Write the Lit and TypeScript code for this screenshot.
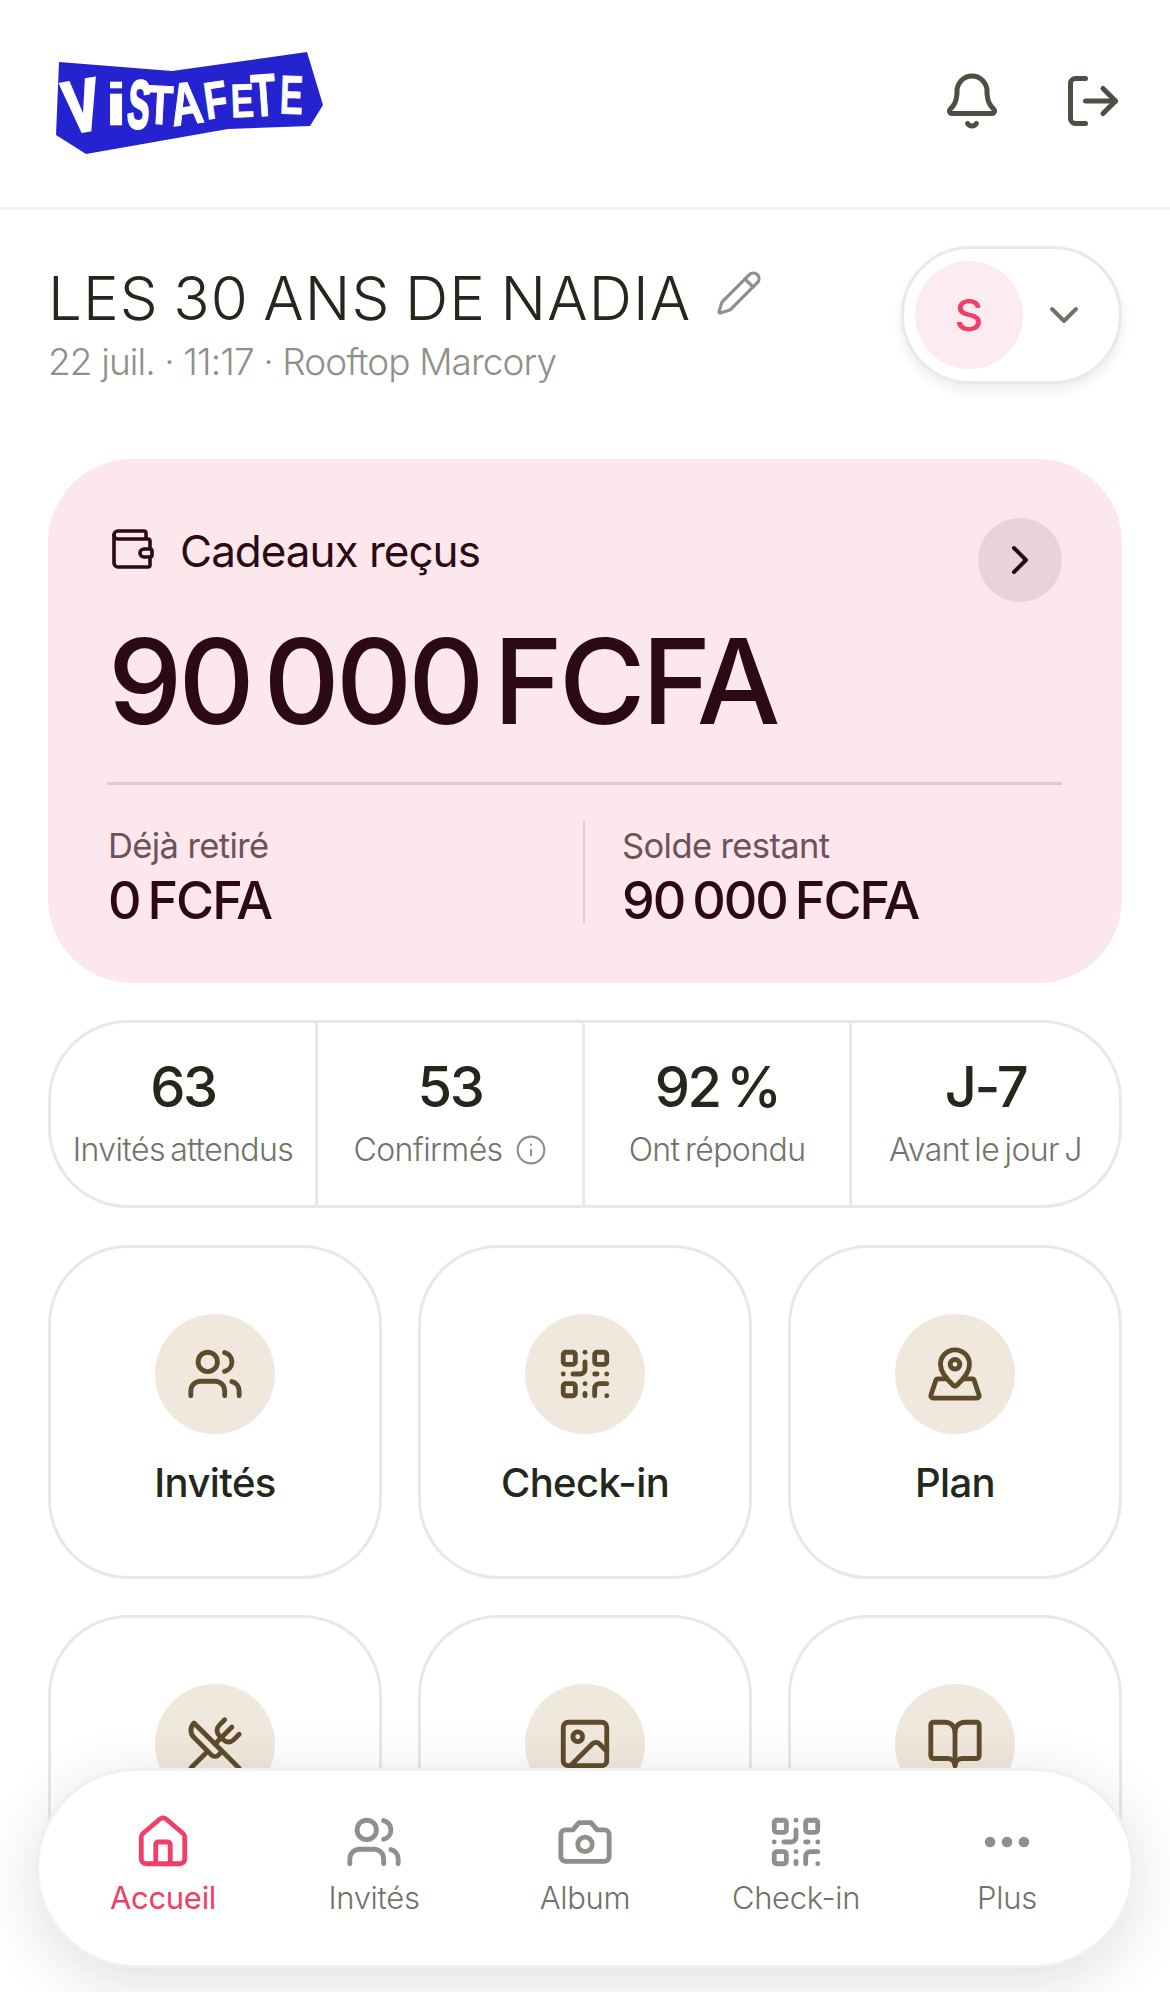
import { LitElement, html, css, svg, nothing } from "lit";
import { customElement } from "lit/decorators.js";

// lucide-style strokes, drawn on a 24 grid
const ICONS: Record<string, unknown> = {
  bell: svg`<path d="M10.268 21a2 2 0 0 0 3.464 0"/><path d="M3.262 15.326A1 1 0 0 0 4 17h16a1 1 0 0 0 .74-1.673C19.41 13.956 18 12.499 18 8A6 6 0 0 0 6 8c0 4.499-1.411 5.956-2.738 7.326"/>`,
  logout: svg`<path d="M9 21H5a2 2 0 0 1-2-2V5a2 2 0 0 1 2-2h4"/><path d="m16 17 5-5-5-5"/><path d="M21 12H9"/>`,
  pencil: svg`<path d="M21.174 6.812a1 1 0 0 0-3.986-3.987L3.842 16.174a2 2 0 0 0-.5.83l-1.321 4.352a.5.5 0 0 0 .623.622l4.353-1.32a2 2 0 0 0 .83-.497z"/><path d="m15 5 4 4"/>`,
  chevronDown: svg`<path d="m6 9 6 6 6-6"/>`,
  chevronRight: svg`<path d="m9 18 6-6-6-6"/>`,
  wallet: svg`<path d="M19 7V4a1 1 0 0 0-1-1H5a2 2 0 0 0 0 4h15a1 1 0 0 1 1 1v4h-3a2 2 0 0 0 0 4h3a1 1 0 0 0 1-1v-2a1 1 0 0 0-1-1"/><path d="M3 5v14a2 2 0 0 0 2 2h15a1 1 0 0 0 1-1v-4"/>`,
  info: svg`<circle cx="12" cy="12" r="10"/><path d="M12 16v-4"/><path d="M12 8h.01"/>`,
  users: svg`<path d="M16 21v-2a4 4 0 0 0-4-4H6a4 4 0 0 0-4 4v2"/><circle cx="9" cy="7" r="4"/><path d="M22 21v-2a4 4 0 0 0-3-3.87"/><path d="M16 3.13a4 4 0 0 1 0 7.75"/>`,
  qr: svg`<rect x="3" y="3" width="5" height="5" rx="1"/><rect x="16" y="3" width="5" height="5" rx="1"/><rect x="3" y="16" width="5" height="5" rx="1"/><path d="M21 16h-3a2 2 0 0 0-2 2v3"/><path d="M21 21v.01"/><path d="M12 7v3a2 2 0 0 1-2 2H7"/><path d="M3 12h.01"/><path d="M12 3h.01"/><path d="M12 16v.01"/><path d="M16 12h1"/><path d="M21 12v.01"/><path d="M12 21v-1"/>`,
  mapPin: svg`<path d="M18 8c0 3.613-3.869 7.429-5.393 8.795a1 1 0 0 1-1.214 0C9.87 15.429 6 11.613 6 8a6 6 0 0 1 12 0"/><circle cx="12" cy="8" r="2"/><path d="M8.714 14h-3.71a1 1 0 0 0-.948.683l-2.004 6A1 1 0 0 0 3 22h18a1 1 0 0 0 .948-1.316l-2-6a1 1 0 0 0-.949-.684h-3.712"/>`,
  utensils: svg`<path d="m16 2-2.3 2.3a3 3 0 0 0 0 4.2l1.8 1.8a3 3 0 0 0 4.2 0L22 8"/><path d="M15 15 3.3 3.3a4.2 4.2 0 0 0 0 6l7.3 7.3c.7.7 2 .7 2.8 0L15 15Zm0 0 7 7"/><path d="m2.1 21.8 6.4-6.3"/><path d="m19 5-7 7"/>`,
  image: svg`<rect x="3" y="3" width="18" height="18" rx="2"/><circle cx="9" cy="9" r="2"/><path d="m21 15-3.086-3.086a2 2 0 0 0-2.828 0L6 21"/>`,
  book: svg`<path d="M12 7v14"/><path d="M3 18a1 1 0 0 1-1-1V4a1 1 0 0 1 1-1h5a4 4 0 0 1 4 4 4 4 0 0 1 4-4h5a1 1 0 0 1 1 1v13a1 1 0 0 1-1 1h-6a3 3 0 0 0-3 3 3 3 0 0 0-3-3z"/>`,
  home: svg`<path d="M15 21v-8a1 1 0 0 0-1-1h-4a1 1 0 0 0-1 1v8"/><path d="M3 10a2 2 0 0 1 .709-1.528l7-5.999a2 2 0 0 1 2.582 0l7 5.999A2 2 0 0 1 21 10v9a2 2 0 0 1-2 2H5a2 2 0 0 1-2-2z"/>`,
  camera: svg`<path d="M14.5 4h-5L7 7H4a2 2 0 0 0-2 2v9a2 2 0 0 0 2 2h16a2 2 0 0 0 2-2V9a2 2 0 0 0-2-2h-3l-2.5-3z"/><circle cx="12" cy="13" r="3"/>`,
  dots: svg`<circle cx="5" cy="12" r="1.2" fill="currentColor"/><circle cx="12" cy="12" r="1.2" fill="currentColor"/><circle cx="19" cy="12" r="1.2" fill="currentColor"/>`,
};

const icon = (name: string, size: number, weight = 2) => html`
  <svg class="icon" width=${size} height=${size} viewBox="0 0 24 24" fill="none" stroke="currentColor"
    stroke-width=${weight} stroke-linecap="round" stroke-linejoin="round">${ICONS[name]}</svg>
`;

// letter, centre x, baseline y, rotation, x scale, y scale, extra stroke
const LOGO_LETTERS: [string, number, number, number, number, number, number][] = [
  ["V", 30, 78, -10, 1.02, 1.42, 3.2],
  ["i", 60, 73, 0, 1.6, 1.2, 0.6],
  ["S", 81, 76, 5, 0.66, 1.36, 2],
  ["T", 103, 72, 3, 0.85, 1.1, 1],
  ["A", 133, 72, -8, 0.9, 1.2, 1],
  ["F", 162, 66, -8, 0.75, 1.05, 1],
  ["E", 187, 65, -2, 0.7, 0.95, 0.6],
  ["T", 209, 64, -4, 0.8, 1.2, 1],
  ["E", 235, 62, 2, 0.7, 1.1, 0.6],
];

@customElement("app-root")
export class AppRoot extends LitElement {
  static styles = css`
    :host {
      display: block;
      position: relative;
      height: 1992px;
      overflow: hidden;
      background: #fff;
      font-family: Inter, "Liberation Sans", sans-serif;
      color: #22281c;
    }
    .icon { display: block; flex-shrink: 0; }

    .top {
      height: 207px;
      border-bottom: 3px solid #f1f1f3;
      display: flex;
      align-items: center;
      padding: 0 47px 0 56px;
    }
    .logo { display: block; margin-top: -2px; }
    .logo polygon { fill: #2522cf; }
    .logo text {
      font-family: "Liberation Sans", sans-serif;
      font-weight: 700;
      font-size: 50px;
      text-anchor: middle;
      fill: #fff;
      stroke: #fff;
    }
    .top-actions { margin: -5px 0 0 auto; display: flex; gap: 61px; color: #4b5045; }

    .event {
      display: flex;
      justify-content: space-between;
      padding: 36px 48px 0 48px;
      height: 249px;
      box-sizing: border-box;
    }
    .event h1 {
      display: flex;
      align-items: center;
      gap: 24px;
      margin: 16px 0 0;
      font-size: 60px;
      line-height: 72px;
      font-weight: 300;
      letter-spacing: 1.1px;
      word-spacing: -3.5px;
    }
    .pencil { color: #8d9189; margin-top: -10px; }
    .event p {
      margin: 6px 0 0;
      font-size: 37px;
      line-height: 44px;
      font-weight: 300;
      letter-spacing: -0.9px;
      color: #8d9189;
    }
    .switch {
      width: 221px;
      height: 138px;
      box-sizing: border-box;
      border: 3px solid #e8e8ee;
      border-radius: 69px;
      box-shadow: 0 6px 12px rgba(30, 30, 50, 0.08);
      display: flex;
      align-items: center;
      padding-left: 11px;
      background: #fff;
    }
    .avatar {
      width: 108px;
      height: 108px;
      border-radius: 50%;
      background: #fcebf0;
      color: #f03e66;
      font-size: 44px;
      font-weight: 500;
      display: flex;
      align-items: center;
      justify-content: center;
    }
    .switch .icon { margin-left: 17px; color: #6f7469; }

    .main {
      margin: 0 48px;
      padding: 48px 60px 0;
      height: 524px;
      box-sizing: border-box;
      border-radius: 84px;
      background: #fce7ec;
      color: #2b0a14;
    }
    .main-head { display: flex; align-items: flex-start; height: 94px; }
    .main-head span { font-size: 44px; line-height: 56px; letter-spacing: -1px; margin: 16px 0 0 24px; font-weight: 400; }
    .main-head .wallet { margin: 18px 0 0 0; }
    .go {
      margin-left: auto;
      margin-top: 11px;
      width: 84px;
      height: 84px;
      border-radius: 50%;
      background: #e9d3da;
      display: flex;
      align-items: center;
      justify-content: center;
    }
    .total {
      font-size: 118px;
      line-height: 140px;
      font-weight: 500;
      letter-spacing: -3.8px;
      word-spacing: -15px;
      margin-top: 10px;
    }
    .main hr {
      border: 0;
      height: 3px;
      background: #e3c9d1;
      margin: 31px 0 0 -1px;
    }
    .split { display: grid; grid-template-columns: 475px 1fr; margin-top: 36px; }
    .split > div { height: 99px; padding-top: 3px; }
    .split > div + div { border-left: 2px solid #e3c9d1; padding-left: 37px; }
    .split label { display: block; font-size: 34.5px; line-height: 44px; letter-spacing: -0.6px; color: #6d5259; }
    .split b { display: block; margin-top: 2px; font-size: 52px; line-height: 62px; font-weight: 500; letter-spacing: -2px; word-spacing: -4px; }

    .stats {
      margin: 37px 48px 0;
      height: 188px;
      box-sizing: border-box;
      border: 3px solid #e8e8ec;
      border-radius: 80px;
      display: grid;
      grid-template-columns: repeat(4, 1fr);
    }
    .stat { display: flex; flex-direction: column; align-items: center; padding-top: 30px; border-right: 3px solid #e8e8ec; }
    .stat:last-child { border-right: 0; }
    .stat b { font-size: 56px; line-height: 68px; font-weight: 500; letter-spacing: -2.4px; word-spacing: -6px; }
    .stat span {
      display: flex;
      align-items: center;
      gap: 12px;
      margin-top: 8px;
      font-size: 32px;
      line-height: 42px;
      font-weight: 300;
      letter-spacing: -0.6px;
      word-spacing: -3px;
      color: #6f7469;
      white-space: nowrap;
    }
    .stat .icon { color: #8d9189; }

    .tiles {
      margin: 37px 48px 0;
      display: grid;
      grid-template-columns: repeat(3, 1fr);
      gap: 36px;
    }
    .tile {
      aspect-ratio: 1;
      box-sizing: border-box;
      border: 3px solid #e8e8ec;
      border-radius: 80px;
      display: flex;
      flex-direction: column;
      align-items: center;
      padding-top: 66px;
      font-size: 40px;
      line-height: 50px;
      font-weight: 500;
      letter-spacing: -0.6px;
    }
    .bubble {
      width: 120px;
      height: 120px;
      border-radius: 50%;
      background: #f0e8dc;
      color: #5f4b2c;
      display: flex;
      align-items: center;
      justify-content: center;
      margin-bottom: 24px;
    }

    .nav {
      position: absolute;
      left: 36px;
      right: 36px;
      top: 1768px;
      height: 200px;
      box-sizing: border-box;
      border: 3px solid #f0f0f2;
      border-radius: 100px;
      background: #fff;
      box-shadow: 0 14px 60px rgba(40, 40, 50, 0.15);
      display: grid;
      grid-template-columns: repeat(5, 211px);
      justify-content: center;
    }
    .nav-item {
      display: flex;
      flex-direction: column;
      align-items: center;
      padding-top: 42px;
      font-size: 31px;
      line-height: 40px;
      letter-spacing: -0.3px;
      font-weight: 300;
      color: #6f7469;
    }
    .nav-item .icon { color: #8d9189; margin-bottom: 7px; }
    .nav-item.active, .nav-item.active .icon { color: #f03e66; font-weight: 400; }
  `;

  render() {
    const stats = [
      { value: "63", label: "Invités attendus" },
      { value: "53", label: "Confirmés", info: true },
      { value: "92 %", label: "Ont répondu" },
      { value: "J-7", label: "Avant le jour J" },
    ];
    const tiles = [
      ["users", "Invités"], ["qr", "Check-in"], ["mapPin", "Plan"],
      ["utensils", "Menu"], ["image", "Album"], ["book", "Livre d'or"],
    ];
    const nav = [
      ["home", "Accueil"], ["users", "Invités"], ["camera", "Album"], ["qr", "Check-in"], ["dots", "Plus"],
    ];
    return html`
      <header class="top">
        <svg class="logo" width="267" height="102" viewBox="0 0 267 102">
          <polygon points="3,10 116,19 251,0 267,53 254,74 172,77 30,102 0,83"></polygon>
          ${LOGO_LETTERS.map(([ch, x, y, r, sx, sy, w]) => svg`
            <text stroke-width=${w} transform="translate(${x},${y}) rotate(${r}) scale(${sx},${sy})">${ch}</text>
          `)}
        </svg>
        <div class="top-actions">
          ${icon("bell", 60)}
          ${icon("logout", 60)}
        </div>
      </header>

      <section class="event">
        <div>
          <h1>LES 30 ANS DE NADIA <span class="pencil">${icon("pencil", 48, 1.6)}</span></h1>
          <p>22 juil. · 11:17 · Rooftop Marcory</p>
        </div>
        <div class="switch">
          <div class="avatar">S</div>
          ${icon("chevronDown", 48, 2)}
        </div>
      </section>

      <section class="main">
        <div class="main-head">
          <span class="wallet">${icon("wallet", 48, 1.8)}</span>
          <span>Cadeaux reçus</span>
          <div class="go">${icon("chevronRight", 48, 2)}</div>
        </div>
        <div class="total">90 000 FCFA</div>
        <hr />
        <div class="split">
          <div><label>Déjà retiré</label><b>0 FCFA</b></div>
          <div><label>Solde restant</label><b>90 000 FCFA</b></div>
        </div>
      </section>

      <section class="stats">
        ${stats.map(s => html`
          <div class="stat">
            <b>${s.value}</b>
            <span>${s.label}${s.info ? icon("info", 32, 1.6) : nothing}</span>
          </div>
        `)}
      </section>

      <section class="tiles">
        ${tiles.map(([name, label]) => html`
          <div class="tile">
            <div class="bubble">${icon(name, 58, 2)}</div>
            ${label}
          </div>
        `)}
      </section>

      <nav class="nav">
        ${nav.map(([name, label], i) => html`
          <div class="nav-item ${i === 0 ? "active" : ""}">
            ${icon(name, 58, 2)}
            ${label}
          </div>
        `)}
      </nav>
    `;
  }
}
